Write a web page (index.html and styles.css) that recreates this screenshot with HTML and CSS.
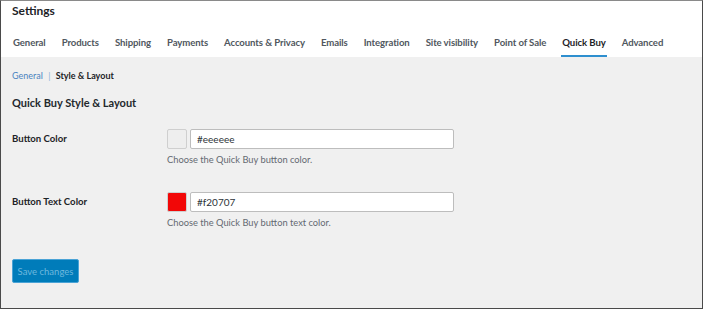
FILE: index.html
```html
<!DOCTYPE html>
<html lang="en">
<head>
    <meta charset="UTF-8">
    <title>Settings - Quick Buy</title>
    <link rel="stylesheet" href="styles.css">
</head>
<body>
    <div class="frame">
        <div class="header">
            <h1 class="page-title">Settings</h1>
            <div class="tabs">
                <a href="#">General</a>
                <a href="#">Products</a>
                <a href="#">Shipping</a>
                <a href="#">Payments</a>
                <a href="#">Accounts &amp; Privacy</a>
                <a href="#">Emails</a>
                <a href="#">Integration</a>
                <a href="#">Site visibility</a>
                <a href="#">Point of Sale</a>
                <a href="#" class="active">Quick Buy</a>
                <a href="#">Advanced</a>
            </div>
        </div>
        <div class="content">
            <div class="subnav">
                <a href="#">General</a>
                <span class="sep">|</span>
                <span class="current">Style &amp; Layout</span>
            </div>
            <h2 class="section-title">Quick Buy Style &amp; Layout</h2>

            <div class="form-row">
                <div class="label">Button Color</div>
                <div class="field">
                    <div class="picker">
                        <span class="swatch" style="background-color: #eeeeee;"></span>
                        <input type="text" value="#eeeeee">
                    </div>
                    <p class="description">Choose the Quick Buy button color.</p>
                </div>
            </div>

            <div class="form-row">
                <div class="label">Button Text Color</div>
                <div class="field">
                    <div class="picker">
                        <span class="swatch" style="background-color: #f20707;"></span>
                        <input type="text" value="#f20707">
                    </div>
                    <p class="description">Choose the Quick Buy button text color.</p>
                </div>
            </div>

            <button type="submit" class="save-btn">Save changes</button>
        </div>
    </div>
</body>
</html>
```

FILE: styles.css
```css
body {
    margin: 0;
    padding: 0;
    font-family: Lato, "Open Sans", sans-serif;
    color: #1d2327;
}

.frame {
    height: 309px;
    box-sizing: border-box;
    border: 1px solid #4a4a4a;
    border-top-color: #8a8a8a;
    background-color: #f0f0f0;
}

/* Top white header */
.header {
    background-color: #fff;
    padding: 0 11px;
}

.page-title {
    margin: 0;
    padding-top: 2px;
    font-size: 12px;
    font-weight: 700;
    line-height: 16px;
    color: #1d2327;
}

.tabs {
    display: flex;
    gap: 14px;
    margin-top: 17px;
    white-space: nowrap;
}

.tabs a {
    font-size: 9.6px;
    font-weight: 700;
    letter-spacing: -0.1px;
    color: #50575e;
    text-decoration: none;
    line-height: 14px;
    padding: 0 1px 5px;
    border-bottom: 2px solid transparent;
}

.tabs a.active {
    color: #1d2327;
    border-bottom-color: #2e8fcf;
}

/* Gray content area */
.content {
    padding: 12px 11px 0;
}

.subnav {
    font-size: 9px;
    line-height: 14px;
}

.subnav a {
    color: #4a84c0;
    text-decoration: none;
}

.subnav .sep {
    color: #8fb4d8;
    margin: 0 3px;
}

.subnav .current {
    font-weight: 700;
    color: #1d2327;
}

.section-title {
    margin: 12px 0 18px;
    font-size: 11px;
    font-weight: 700;
    line-height: 16px;
    color: #23282d;
}

.form-row {
    display: flex;
    margin-bottom: 25px;
}

.label {
    width: 155px;
    font-size: 9.6px;
    font-weight: 700;
    line-height: 14px;
    padding-top: 3px;
    color: #1d2327;
}

.picker {
    display: flex;
    gap: 3px;
}

.swatch {
    width: 18px;
    height: 18px;
    border: 1px solid #cfcfcf;
    border-radius: 2px;
}

.picker input[type=text] {
    width: 264px;
    height: 20px;
    box-sizing: border-box;
    border: 1px solid #bdbdbd;
    border-radius: 2px;
    background-color: #fff;
    padding: 0 6px;
    font-family: Lato, "Open Sans", sans-serif;
    font-size: 10px;
    color: #2c3338;
}

.description {
    margin: 4px 0 0;
    font-size: 9.3px;
    line-height: 14px;
    color: #646970;
}

.save-btn {
    margin-top: 4px;
    width: 67px;
    height: 24px;
    padding: 0;
    background-color: #007cba;
    border: 1px solid #4aa3d6;
    border-radius: 2px;
    color: #6cb8de;
    font-family: Lato, "Open Sans", sans-serif;
    font-size: 9.5px;
    cursor: pointer;
}
```
